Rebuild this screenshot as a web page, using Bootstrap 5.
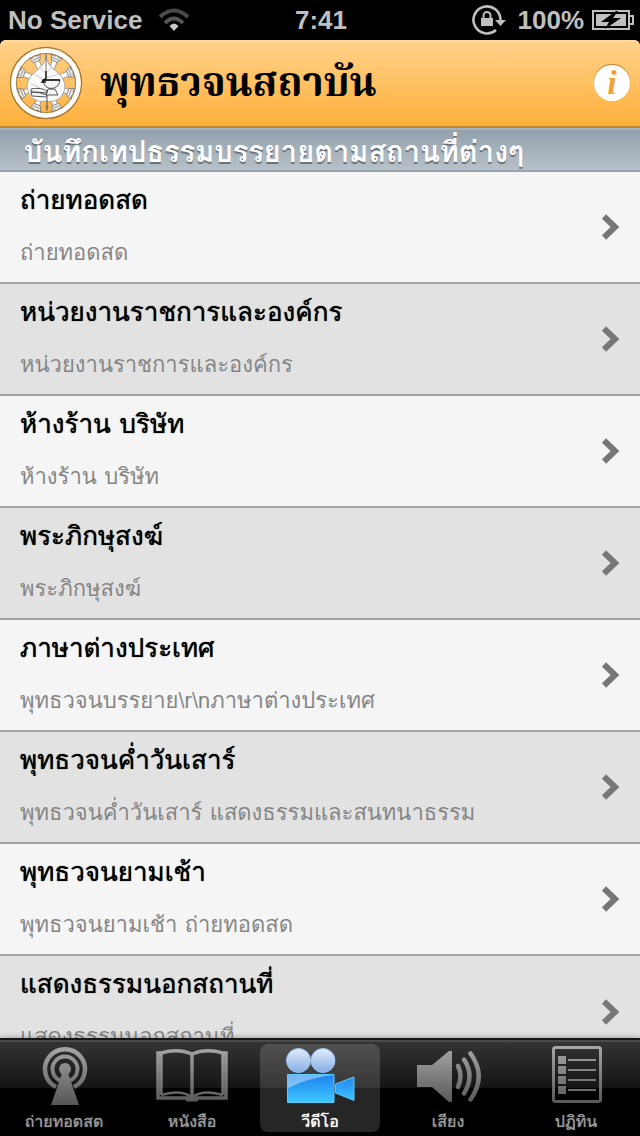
<!DOCTYPE html>
<html lang="th">
<head>
<meta charset="utf-8">
<meta name="viewport" content="width=device-width, initial-scale=1">
<title>พุทธวจนสถาบัน</title>
<link href="https://cdn.jsdelivr.net/npm/bootstrap@5.3.0/dist/css/bootstrap.min.css" rel="stylesheet">
<style>
  body { font-family: Loma, "Liberation Sans", sans-serif; background: #000; }
  .status-bar { height: 40px; padding: 0 6px 0 8px; color: #bfbfbf; font: bold 26px/40px "Liberation Sans", sans-serif; }
  .app-header { height: 88px; padding: 0 10px 0 8px; background: linear-gradient(#ffd28c, #ffb03a); border-bottom: 2px solid #c2862c; border-radius: 6px 6px 0 0; box-shadow: inset 0 2px #ffdb9f; }
  .app-title { font: bold 40px/60px "Noto Serif Thai", Loma, serif; color: #000; }
  .info-btn { width: 36px; height: 36px; border-radius: 50%; background: #fff; color: #f0a238; font: italic bold 34px/34px "Liberation Serif", serif; box-shadow: 0 -1px 1px #b9802f; }
  .section-head { height: 44px; padding-left: 24px; background: linear-gradient(#92a0ac, #b8c1c8); border-top: 2px solid #a8b4bd; border-bottom: 2px solid #96a2ad; color: #fff; font-size: 29px; line-height: 44px; font-weight: bold; text-shadow: 0 2px 0 #6c747b; }
  .place-list { overflow: hidden auto; scrollbar-width: none; }
  .place-list::-webkit-scrollbar { display: none; }
  .place-list > .place-row { height: 112px; padding: 4px 20px; background: #f5f5f5; border: 0; border-bottom: 2px solid #a4a4a4; color: #000; }
  .place-list > .place-row:nth-child(even) { background: #e2e2e2; }
  .place-name { margin-bottom: 4px; font-size: 26px; line-height: 48px; text-shadow: 0 0 1px #000; }
  .place-note { font-size: 22px; line-height: 50px; color: #858585; }
  .tab-strip { height: 98px; padding: 4px 0; background: linear-gradient(#353535, #141414 48px, #000 48px); border-top: 2px solid #161616; box-shadow: inset 0 2px #4a4a4a, 0 -2px 4px #0003; }
  .tab-link { width: 120px; height: 88px; border-radius: 8px; color: #999; font-size: 16px; line-height: 28px; text-decoration: none; text-shadow: 0 0 1px; }
  .tab-link svg { flex: none; }
  .tab-link.active { background: #ffffff26; color: #fff; }
</style>
</head>
<body>
<div class="d-flex flex-column vh-100 overflow-hidden">
  <div class="status-bar row g-0 flex-shrink-0">
    <div class="col d-flex align-items-center gap-3">
      <span>No Service</span>
      <svg width="32" height="26" viewBox="0 0 32 26" fill="none" stroke-width="4" role="img" aria-label="Wi-Fi">
        <path d="M2 10Q16-3 30 10" stroke="#4a4a4a"/><path d="M7 16Q16 7 25 16" stroke="#555"/><path d="M11.500 19Q16 14 20.500 19L16 24Z" fill="#c8c8c8"/>
      </svg>
    </div>
    <div class="col-auto">7:41</div>
    <div class="col d-flex align-items-center justify-content-end gap-2">
      <svg class="me-1" width="34" height="32" viewBox="0 0 34 32" role="img" aria-label="ล็อกแนวหน้าจอ">
        <path d="M28.500 16A13.500 13.500 0 1 0 24 26" fill="none" stroke="#bfbfbf" stroke-width="2.600"/><path d="M23 16H34L28.500 22Z" fill="#bfbfbf"/>
        <rect x="9" y="14" width="12" height="8" fill="#bfbfbf"/><path d="M11.500 14V11.500a3.500 3.500 0 0 1 7 0V14" fill="none" stroke="#bfbfbf" stroke-width="2"/>
      </svg>
      <span>100%</span>
      <svg width="42" height="22" viewBox="0 0 42 22" role="img" aria-label="กำลังชาร์จ">
        <rect x="1" y="2" width="36" height="18" fill="none" stroke="#bfbfbf" stroke-width="2"/><path d="M38 7h3v8h-3" fill="none" stroke="#bfbfbf" stroke-width="2"/>
        <rect x="4" y="5" width="30" height="12" fill="#bfbfbf"/><path d="M24 2L9 13H17L13 20L29 9H21L26 2Z" fill="#000"/>
      </svg>
    </div>
  </div>

  <header class="app-header flex-shrink-0 d-flex align-items-center">
    <svg width="76" height="76" viewBox="0 0 76 76" role="img" aria-label="ตราสถาบัน">
      <defs><g id="spoke"><path d="M35.500 14H40.500V26H35.500Z" fill="#fafafa" stroke="#888" stroke-width=".7"/><path d="M32 8.500L34.500 14.500H41.500L44 8.500L41 10 38 8.500 35 10Z" fill="#eee" stroke="#777" stroke-width=".8"/><path d="M34.500 12H41.500" stroke="#888" stroke-width=".8"/></g></defs>
      <circle cx="38" cy="38" r="35.500" fill="none" stroke="#a97a35" stroke-width="1.500"/>
      <circle cx="38" cy="38" r="32.300" fill="none" stroke="#fff" stroke-width="5"/>
      <circle cx="38" cy="38" r="29.500" fill="none" stroke="#a97a35"/>
      <g><use href="#spoke" transform="rotate(22 38 38)"/><use href="#spoke" transform="rotate(67 38 38)"/><use href="#spoke" transform="rotate(112 38 38)"/><use href="#spoke" transform="rotate(157 38 38)"/><use href="#spoke" transform="rotate(202 38 38)"/><use href="#spoke" transform="rotate(247 38 38)"/><use href="#spoke" transform="rotate(292 38 38)"/><use href="#spoke" transform="rotate(337 38 38)"/></g>
      <path d="M38 10C39 19 43 22 49 27C55 32 58 39 56.500 45C54 55 44 58 38 56C32 58 22 55 19.500 45C18 39 21 32 27 27C33 22 37 19 38 10Z" fill="#fbfbfb" stroke="#999" stroke-width=".8"/>
      <path d="M38 28L45 22M38 33L51 29M38 28L31 22M36 35L26 29M22 38L32 43" stroke="#bbb" fill="none" stroke-width=".8"/>
      <path d="M38 9V34" stroke="#555" fill="none" stroke-width=".8"/>
      <path d="M34.500 35H52Q51 43 43 43.500Q36 43 34.500 35ZM40 44H47L50 50H38ZM23 44Q33 42 39 46V48Q32 47 23 47ZM23 47Q32 47 39 50V52L24 51Z" fill="#f4f4f4" stroke="#444" stroke-width=".9"/>
      <path d="M34.500 35H52M38 26V33L34 37H38" stroke="#111" fill="none" stroke-width="1.300"/><path d="M39 52V66" stroke="#555"/><circle cx="39" cy="62" r="1.500" fill="#777"/>
    </svg>
    <h1 class="app-title m-0 ms-3 pt-1 flex-grow-1">พุทธวจนสถาบัน</h1>
    <button type="button" class="info-btn btn p-0 border-0" aria-label="ข้อมูล">i</button>
  </header>

  <h2 class="section-head m-0 flex-shrink-0 text-nowrap">บันทึกเทปธรรมบรรยายตามสถานที่ต่างๆ</h2>

  <main class="place-list list-group list-group-flush rounded-0 flex-grow-1" id="places"></main>

  <nav class="tab-strip flex-shrink-0 row g-0 position-relative" aria-label="เมนูหลัก">
    <svg width="0" height="0" class="position-absolute" aria-hidden="true"><defs>
      <linearGradient id="metal" gradientUnits="userSpaceOnUse" x1="0" y1="0" x2="0" y2="60"><stop stop-color="#aaa"/><stop offset="1" stop-color="#575757"/></linearGradient>
      <linearGradient id="reel" x1="0" y1="0" x2="0" y2="1"><stop stop-color="#e2ecfb"/><stop offset="1" stop-color="#86aee8"/></linearGradient>
      <linearGradient id="film" x1="0" y1="0" x2="0" y2="1"><stop stop-color="#1f80ee"/><stop offset="1" stop-color="#3ec8ff"/></linearGradient>
    </defs></svg>
    <div class="col d-flex justify-content-center"><a href="#live" class="tab-link d-flex flex-column align-items-center">
      <svg width="76" height="64" viewBox="0 0 76 64"><g fill="none" stroke="url(#metal)"><path d="M30 43A20 20 0 1 1 48 43" stroke-width="4.500"/><path d="M34 36.500A12.500 12.500 0 1 1 44 36.500" stroke-width="4"/></g><circle cx="39" cy="25" r="6" fill="url(#metal)"/><path d="M36 29H42L53 61H25Z" fill="url(#metal)"/></svg>
      <span>ถ่ายทอดสด</span></a></div>
    <div class="col d-flex justify-content-center"><a href="#books" class="tab-link d-flex flex-column align-items-center">
      <svg width="76" height="64" viewBox="0 0 76 64" fill="none" stroke="url(#metal)" stroke-width="3.500"><path d="M7 9H4V54H72V9H69"/><path d="M7 51V9Q24 4 38 10Q52 4 69 9V51M38 10V54"/><path d="M7 51Q26 45 38 53Q50 45 69 51" stroke-width="2.500"/><path d="M32 56H44" stroke-width="3"/></svg>
      <span>หนังสือ</span></a></div>
    <div class="col d-flex justify-content-center"><a href="#video" class="tab-link active d-flex flex-column align-items-center" aria-current="page">
      <svg width="76" height="64" viewBox="0 0 76 64"><circle cx="16.500" cy="16.500" r="12" fill="url(#reel)" stroke="#9cc4f5"/><circle cx="41" cy="16.500" r="12" fill="url(#reel)" stroke="#9cc4f5"/><path d="M5.500 30.500H52V58.500H5.500ZM53.500 40L72 33V56.500L53.500 49Z" fill="url(#film)" stroke="#58cdfb"/><path d="M6 31H51Q26 34 6 44Z" fill="#fff" fill-opacity=".4"/></svg>
      <span>วีดีโอ</span></a></div>
    <div class="col d-flex justify-content-center"><a href="#audio" class="tab-link d-flex flex-column align-items-center">
      <svg width="76" height="64" viewBox="0 0 76 64"><path d="M7 21H22L39 7H42V58H39L22 43H7Z" fill="url(#metal)"/><g fill="none" stroke="url(#metal)" stroke-width="4.500" stroke-linecap="round"><path d="M48 22Q53 32 48 43"/><path d="M54 15.500Q65 32 54 49.500"/><path d="M60.500 9.500Q77 32 60.500 55.500"/></g></svg>
      <span>เสียง</span></a></div>
    <div class="col d-flex justify-content-center"><a href="#calendar" class="tab-link d-flex flex-column align-items-center">
      <svg width="76" height="64" viewBox="0 0 76 64"><rect x="15.500" y="3.500" width="47" height="54" rx="2" fill="none" stroke="url(#metal)" stroke-width="3"/><path d="M20 12h8v8h-8zM20 22h8v8h-8zM20 32h8v8h-8zM20 42h8v8h-8zM30 15h28v2h-28zM30 25h28v2h-28zM30 35h28v2h-28zM30 45h28v2h-28z" fill="url(#metal)"/></svg>
      <span>ปฏิทิน</span></a></div>
  </nav>
</div>
<script src="https://cdn.jsdelivr.net/npm/bootstrap@5.3.0/dist/js/bootstrap.bundle.min.js"></script>
<script>
  const places = [
    ['ถ่ายทอดสด', 'ถ่ายทอดสด'],
    ['หน่วยงานราชการและองค์กร', 'หน่วยงานราชการและองค์กร'],
    ['ห้างร้าน บริษัท', 'ห้างร้าน บริษัท'],
    ['พระภิกษุสงฆ์', 'พระภิกษุสงฆ์'],
    ['ภาษาต่างประเทศ', 'พุทธวจนบรรยาย\\r\\nภาษาต่างประเทศ'],
    ['พุทธวจนค่ำวันเสาร์', 'พุทธวจนค่ำวันเสาร์ แสดงธรรมและสนทนาธรรม'],
    ['พุทธวจนยามเช้า', 'พุทธวจนยามเช้า ถ่ายทอดสด'],
    ['แสดงธรรมนอกสถานที่', 'แสดงธรรมนอกสถานที่']
  ];
  document.getElementById('places').innerHTML = places.map(([name, note]) => `
    <a href="#place" class="place-row list-group-item flex-shrink-0 d-flex justify-content-between">
      <div class="text-nowrap"><div class="place-name">${name}</div><div class="place-note">${note}</div></div>
      <svg class="align-self-center" width="20" height="28" viewBox="0 0 20 28" fill="none" stroke="#777" stroke-width="6" aria-hidden="true"><path d="M4 3.500L15 14L4 24.500"/></svg>
    </a>`).join('');
</script>
</body>
</html>
